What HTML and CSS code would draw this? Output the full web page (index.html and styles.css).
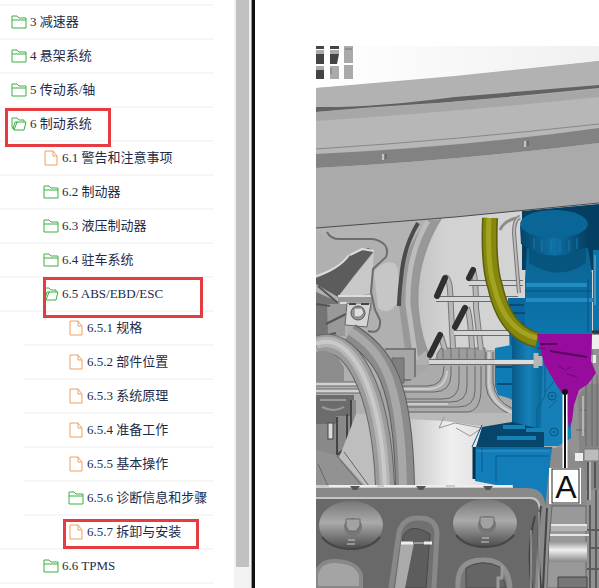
FILE: index.html
```html
<!DOCTYPE html>
<html lang="zh-CN">
<head>
    <meta charset="UTF-8">
    <meta name="viewport" content="width=device-width, initial-scale=1.0">
    <title>制动系统 - 6.5.7 拆卸与安装</title>
    <link rel="stylesheet" href="styles.css">
</head>
<body>
    <!-- Icons used by the tree -->
    <svg class="sprite" aria-hidden="true">
        <symbol id="icon-folder" viewBox="0 0 17 15">
            <path d="M1 13V1h5l2 2h7v10zM1 5h14" />
        </symbol>
        <symbol id="icon-open" viewBox="0 0 17 15">
            <path d="M3 13L1 10V1h5l2 2h5v2M3 13h10l2-8H6zM2 12l2-7h3" />
        </symbol>
        <symbol id="icon-file" viewBox="0 0 15 17">
            <path d="M1 1h8l4 5v9H1zM9 1v5h4" />
        </symbol>
    </svg>

    <div class="page">
        <!-- Left menu -->
        <nav class="sidebar">
            <ul class="tree">
                <li><a class="row" href="#"><svg class="icon folder"><use href="#icon-folder" /></svg>3 减速器</a></li>
                <li><a class="row" href="#"><svg class="icon folder"><use href="#icon-folder" /></svg>4 悬架系统</a></li>
                <li><a class="row" href="#"><svg class="icon folder"><use href="#icon-folder" /></svg>5 传动系/轴</a></li>
                <li>
                    <a class="row" href="#"><svg class="icon folder"><use href="#icon-open" /></svg>6 制动系统<span class="mark mark-system"></span></a>
                    <ul class="level-2">
                        <li><a class="row" href="#"><svg class="icon file"><use href="#icon-file" /></svg>6.1 警告和注意事项</a></li>
                        <li><a class="row" href="#"><svg class="icon folder"><use href="#icon-folder" /></svg>6.2 制动器</a></li>
                        <li><a class="row" href="#"><svg class="icon folder"><use href="#icon-folder" /></svg>6.3 液压制动器</a></li>
                        <li><a class="row" href="#"><svg class="icon folder"><use href="#icon-folder" /></svg>6.4 驻车系统</a></li>
                        <li class="group">
                            <a class="row" href="#"><svg class="icon folder"><use href="#icon-open" /></svg>6.5 ABS/EBD/ESC<span class="mark mark-abs"></span></a>
                            <ul class="level-3">
                                <li><a class="row" href="#"><svg class="icon file"><use href="#icon-file" /></svg>6.5.1 规格</a></li>
                                <li><a class="row" href="#"><svg class="icon file"><use href="#icon-file" /></svg>6.5.2 部件位置</a></li>
                                <li><a class="row" href="#"><svg class="icon file"><use href="#icon-file" /></svg>6.5.3 系统原理</a></li>
                                <li><a class="row" href="#"><svg class="icon file"><use href="#icon-file" /></svg>6.5.4 准备工作</a></li>
                                <li><a class="row" href="#"><svg class="icon file"><use href="#icon-file" /></svg>6.5.5 基本操作</a></li>
                                <li><a class="row" href="#"><svg class="icon folder"><use href="#icon-folder" /></svg>6.5.6 诊断信息和步骤</a></li>
                                <li><a class="row" href="#"><svg class="icon file"><use href="#icon-file" /></svg>6.5.7 拆卸与安装<span class="mark mark-install"></span></a></li>
                            </ul>
                        </li>
                        <li><a class="row" href="#"><svg class="icon folder"><use href="#icon-folder" /></svg>6.6 TPMS</a></li>
                    </ul>
                </li>
            </ul>
        </nav>
        <div class="scrollbar"><div class="thumb"></div></div>

        <!-- Document -->
        <main class="content">
            <svg class="figure" viewBox="316 46 283 542" role="img" aria-label="ABS A">
                <defs>
                    <linearGradient id="sky"><stop offset="0" stop-color="#fff" /><stop offset="1" stop-color="#f0f0f0" /></linearGradient>
                    <linearGradient id="cyl"><stop offset="0" stop-color="#075a87" /><stop offset=".5" stop-color="#1682b9" /><stop offset="1" stop-color="#07638f" /></linearGradient>
                    <linearGradient id="cap"><stop offset="0" stop-color="#04466c" /><stop offset=".5" stop-color="#0f71a6" /><stop offset="1" stop-color="#043e60" /></linearGradient>
                    <linearGradient id="tank" x2="0" y2="1"><stop offset="0" stop-color="#0c6392" /><stop offset="1" stop-color="#0b76ad" /></linearGradient>
                    <linearGradient id="bowl" x2="0" y2="1"><stop offset="0" stop-color="#777" /><stop offset=".45" stop-color="#aaa" /><stop offset="1" stop-color="#4c4c4c" /></linearGradient>
                    <linearGradient id="metal" x2="0" y2="1"><stop offset="0" stop-color="#999" /><stop offset=".4" stop-color="#f0f0f0" /><stop offset="1" stop-color="#888" /></linearGradient>
                    <linearGradient id="panel"><stop offset="0" stop-color="#c6c6c6" /><stop offset=".5" stop-color="#efefef" /><stop offset="1" stop-color="#ddd" /></linearGradient>
                    <linearGradient id="arch"><stop offset="0" stop-color="#c4c4c4" /><stop offset=".15" stop-color="#d2d2d2" /><stop offset="1" stop-color="#d6d6d6" /></linearGradient>
                </defs>
                <rect x="316" y="46" width="283" height="542" fill="#b0b0b0" />

                <!-- bonnet edge -->
                <path d="M316 46H599V61L455 76 316 88z" fill="url(#sky)" />
                <path d="M316 46h8v3h-8zM330 46h9v3h-9zM316 54h8v10h-8zM330 54h9l-2 10h-7zM316 70h8v9h-8z" fill="#444" />
                <path d="M316 50h8v4h-8zM330 50h9v4h-9zM316 66h8v4h-8zM330 66h9v13h-9zM344 46h9v17h-9zM344 65h9v14h-9z" fill="#aaa" />
                <path d="M331 68v6M345 49h7" stroke="#777" />
                <path d="M316 88Q455 79 599 61V88Q455 102 316 112z" fill="#b2b2b2" />
                <path d="M316 107Q370 108 455 97L599 85v3Q470 101 420 104T316 112z" fill="#626262" />
                <path d="M316 112Q455 103 599 89V97Q455 112 316 121z" fill="#a7a7a7" />
                <path d="M316 121Q455 112 599 97V129Q455 146 316 154z" fill="#b7b7b7" />
                <path d="M316 149Q455 140 599 124" fill="none" stroke="#888" />
                <path d="M316 154Q455 148 599 128V143Q455 161 316 168z" fill="#828282" />
                <path d="M316 168Q455 161 599 143V203L455 217 316 228z" fill="#aaa" />
                <path d="M383 154v6M525 141v6" stroke="#c4c4c4" stroke-width="2" />
                <path d="M386 154v5M528 141v5" stroke="#6b6b6b" stroke-width="2" />

                <!-- engine bay -->
                <path d="M316 228L420 220 398 303 380 314 372 280 387 250 373 239 340 240 316 232z" fill="#b3b3b3" />
                <path d="M374 272q8-12 20-9 7 4 4 38-8 16-20 7z" fill="#c6c6c6" />
                <path d="M428 220Q397 255 399 306L407 365 440 340V220z" fill="#989898" />
                <path d="M418 223Q405 245 402 270T399 306" fill="none" stroke="#4b4b4b" stroke-width="4" />
                <path d="M428 221Q407 255 408 305L416 360" fill="none" stroke="#bcbcbc" stroke-width="5" />
                <path d="M441 218Q414 262 418 310 420 337 432 363H599V203z" fill="url(#arch)" />
                <path d="M441 218Q414 262 418 310 420 337 432 363" fill="none" stroke="#979797" stroke-width="2" />
                <path d="M316 278Q340 269 350 255L368 248 374 251 353 277 338 297 326 290 316 284z" fill="#5c5c5c" />
                <path d="M338 297L374 252 371 293 338 300z" fill="#c8c8c8" />
                <path d="M350 255l12-6 12 2M316 276q23-7 33-21" fill="none" stroke="#ddd" stroke-width="2" />
                <path d="M338 297h34v14h-34z" fill="#989898" />
                <path d="M338 296h34M340 303h31" stroke="#ddd" stroke-width="2" />
                <path d="M327 232Q331 240 342 239H373Q391 243 386 257L373 269 371 292 375 310 380 320Q381 335 368 331" fill="none" stroke="#6d6d6d" stroke-width="2" />
                <path d="M316 292l18 8 8 8-1 25-25 14z" fill="#747474" />
                <path d="M327 304h18v32h-17z" fill="#999" />
                <path d="M318 286l20 17M316 304l14 2M326 324l20-10M316 338l20-5" stroke="#555" stroke-width="2" />
                <path d="M347 303h24l-4 24-22-2z" fill="#d5d5d5" stroke="#666" />
                <circle cx="358" cy="313" r="7" fill="#999" stroke="#555" />
                <path d="M354 308h8l2 5-4 4h-6z" fill="#ddd" stroke="#777" />
                <path d="M349 304h7M361 304h8" stroke="#444" stroke-width="2" />
                <path d="M380 348h35v17h31v100h-66z" fill="#a6a6a6" />
                <path d="M385 349h30v31h-14" fill="none" stroke="#777" stroke-width="2" />
                <path d="M392 358h12v25h-12z" fill="#808080" stroke="#666" />

                <!-- pipe bundle -->
                <path d="M430 366L440 350H513V424H407V383z" fill="#ababab" />
                <path d="M437 354l4-6h44v14h-48z" fill="#9d9d9d" stroke="#777" />
                <g fill="none" stroke="#777" stroke-width="6">
                    <path d="M445 277q4 1 5 12l3 59M467 308q3 5 5 40M473 270q3 10 3 38l5 42M441 336l4 14" />
                </g>
                <g fill="none" stroke="#b7b7b7" stroke-width="4">
                    <path d="M445 277q4 1 5 12l3 59M467 308q3 5 5 40M473 270q3 10 3 38l5 42M441 336l4 14" />
                </g>
                <path d="M443 348v14M451 348v14M459 348v14M467 348v14M475 348v14" stroke="#737373" />
                <!-- nested runs below the clamp -->
                <g fill="none" stroke="#676767">
                    <path d="M444 366q0 20-17 20H400M451 366v8q0 18-17 18H400M459 366v16q0 17-16 17H400M467 366v20q0 16-16 16H402M475 366v24q0 17-17 17H408M481 366v22q0 24-15 24H408" />
                    <path d="M486 352v34q1 18 27 30M493 352v30q2 19 20 27M499 352v26q2 18 14 22" />
                </g>
                <path d="M489 352v31q1 20 24 30" fill="none" stroke="#ccc" stroke-width="3" />
                <path d="M402 389h27q17-1 18-18M402 404h46" fill="none" stroke="#ccc" stroke-width="2" />
                <!-- pipes running to the unit -->
                <path d="M436 299h82M469 283h54M454 333h56M429 362h108" stroke="#6b6b6b" stroke-width="6" />
                <path d="M436 299h82M469 283h54M454 333h56M429 362h108" stroke="#d6d6d6" stroke-width="4" />
                <g fill="none" stroke="#2f2f2f" stroke-width="6" stroke-linecap="round">
                    <path d="M445 278l-8 18M473 270l-4 8M465 308l-10 19M440 335l-10 20" />
                </g>
                <path d="M316 384h45M316 391h45" stroke="#666" stroke-width="5" />
                <path d="M316 384h45M316 391h45" stroke="#d1d1d1" stroke-width="3" />

                <!-- left housing -->
                <path d="M316 395h38v54h-38z" fill="#6c6c6c" />
                <path d="M322 407q12 6 22 0M320 400h26" fill="none" stroke="#999" stroke-width="2" />
                <path d="M316 424h20v-8h16v-16h4v42l-8 15h-32z" fill="#898989" />
                <path d="M337 417v38l10-8V414M351 400v43" fill="none" stroke="#444" stroke-width="2" />
                <rect x="328" y="423" width="5" height="16" fill="#ddd" stroke="#444" />
                <path d="M356 414h24l8 72h-38l-11-28z" fill="#bebebe" />
                <path d="M316 450l21 5 28 31h-49z" fill="#929292" />
                <path d="M337 456l25 30M344 452l25 34M318 464l10 22" stroke="#666" />
                <path d="M407 413h51l36 6v67h-87z" fill="url(#panel)" />
                <path d="M407 413h106v10l-14 6-54-8-38-2z" fill="#b9b9b9" />
                <path d="M444 417l-5 11 16-5M455 423l27 5-12 8-14-8" fill="none" stroke="#999" />

                <!-- hoses -->
                <g fill="none">
                    <path d="M350 333C384 355 403 380 405 486" stroke="#5c5c5c" stroke-width="20" />
                    <path d="M350 333C384 355 403 380 405 486" stroke="#8b8b8b" stroke-width="18" />
                    <path d="M350 331C384 353 401 380 403 486" stroke="#a8a8a8" stroke-width="8" />
                    <path d="M316 346C350 332 381 386 385 486" stroke="#666" stroke-width="20" />
                    <path d="M316 346C350 332 381 386 385 486" stroke="#9b9b9b" stroke-width="18" />
                    <path d="M316 344C350 330 381 386 385 486" stroke="#b5b5b5" stroke-width="10" />
                    <path d="M316 344C350 330 381 386 385 486" stroke="#c9c9c9" stroke-width="4" />
                </g>
                <path d="M316 352q18-5 28 16v13h-28z" fill="#8c8c8c" />

                <!-- ABS unit, blue -->
                <path d="M508 298h20v60h-18z" fill="#0869a0" />
                <path d="M509 305h15M505 313h20M504 324h20" stroke="#064c77" stroke-width="2" />
                <path d="M495 348l17-3v54l-14-4-3-9z" fill="#107cb6" />
                <path d="M496 367h17M497 384h15" stroke="#064d77" stroke-width="2" />
                <path d="M512 333h33v98h-33z" fill="url(#cyl)" />
                <path d="M495 362h42" stroke="#6b6b6b" stroke-width="6" />
                <path d="M495 362h42" stroke="#ddd" stroke-width="4" />
                <path d="M543 350l13-2 8 33 8 17-1 48h-31z" fill="#167fb7" />
                <path d="M545 356v40l-8 12v28M557 378l-12 14M557 400l-8 8" fill="none" stroke="#0b5f8e" />
                <path d="M482 427l30-5 32 8v17h-68z" fill="#05466a" />
                <path d="M497 438h39M503 427h22M526 430h18" stroke="#1680b8" stroke-width="4" />
                <path d="M475 447h77l2 3-6 60h-4l-6-17-63-12z" fill="#127db9" />
                <path d="M472 447l10-22M474 448h78M482 448v24M496 482v-26h53" fill="none" stroke="#075a89" />
                <path d="M474 447v32" stroke="#04334d" stroke-width="3" />
                <path d="M477 451h72" stroke="#2b97ca" />
                <g fill="#1680b8" stroke="#0b5580"><circle cx="552" cy="396" r="4" /><circle cx="554" cy="432" r="4" /><circle cx="552" cy="396" r="1" /><circle cx="554" cy="432" r="1" /></g>
                <path d="M536 353v15M540 356v10" stroke="#b6b6b6" stroke-width="5" />

                <!-- reservoir -->
                <path d="M522 211L599 204V270H522z" fill="#043f62" />
                <path d="M593 250h6v86h-6z" fill="#0875ad" />
                <path d="M595 255v50" stroke="#7fb3cf" />
                <path d="M527 248h61l4 25v61h-65l-2-10V279z" fill="url(#tank)" />
                <path d="M529 244q27 20 57 2v17q-27 19-57 0z" fill="#07547f" />
                <path d="M526 283h61v4h-61zM526 298h67v4h-67z" fill="#218bc2" />
                <path d="M525 291h67M588 279v53" stroke="#07527f" />
                <path d="M520 226q35-16 68 0v20q-35 20-67-2z" fill="url(#cap)" />
                <path d="M534 238v11M542 240v11M551 241v11M560 241v11M569 240v11M577 238v11" stroke="#1b7cae" />
                <ellipse cx="554" cy="224" rx="34" ry="14" fill="#0a6696" />
                <path d="M520 217q-6 2-6 16l5 60" fill="none" stroke="#777" stroke-width="4" />
                <path d="M520 217q-6 2-6 16l5 60" fill="none" stroke="#bbb" stroke-width="2" />
                <path d="M516 218q-12 3-16 12" fill="none" stroke="#8d8d8d" stroke-width="3" />

                <path d="M490 218Q488 265 495 286 505 332 537 340" fill="none" stroke="#5c5f08" stroke-width="16" />
                <path d="M490 218Q488 265 495 286 505 332 537 340" fill="none" stroke="#85870f" stroke-width="13" />
                <path d="M489 218Q487 265 494 286 504 330 537 338" fill="none" stroke="#a3a320" stroke-width="5" />
                <path d="M316 228L455 217 599 203V190L455 204 316 214z" fill="#aaa" />
                <path d="M316 228L455 217 599 203" fill="none" stroke="#4b4b4b" />

                <!-- right side parts -->
                <path d="M573 334h26v254h-54v-80l10-60 16-10z" fill="#929292" />
                <path d="M592 335h7v14h-7zM588 355h8v8h-8z" fill="#eee" />
                <path d="M592 332h7" stroke="#333" stroke-width="3" />
                <path d="M578 396l9-12h12v106h-19z" fill="#858585" />
                <path d="M586 380v66M592 350v96M597 375v71M580 410h6M576 430h9" stroke="#666" />
                <path d="M583 396v40M590 460v40" stroke="#b4b4b4" stroke-width="2" />
                <path d="M584 449h15v12h-15z" fill="#bcbcbc" stroke="#777" />
                <path d="M588 462v38M595 462v26" stroke="#555" stroke-width="2" />
                <path d="M552 448h16l17 22 2 38h-42l3-28z" fill="#8b8b8b" />
                <path d="M575 453h8v8h-8z" fill="#eee" />
                <path d="M537 334h55l-1 27 5 12-8 11-9 6-5 15-2 16-3 8-4-31-9-14-6-10-6-11z" fill="#970c9c" />
                <path d="M540 344h17M550 351l37 6" fill="none" stroke="#55055a" stroke-width="2" />
                <path d="M537 348l9 1M558 366l7 4 6-3M567 374l10 3" fill="none" stroke="#6f0874" />

                <!-- lower tray -->
                <path d="M316 485h197v10H316z" fill="#ccc" />
                <path d="M316 488H527q16 0 18 15v85H316z" fill="#898989" />
                <path d="M316 499H530q9 0 9 11l-4 78H316z" fill="#696969" />
                <path d="M316 498H531q8 0 9 12" fill="none" stroke="#c4c4c4" stroke-width="2" />
                <path d="M329 486h48M384 486h62M455 486h57" stroke="#eee" stroke-width="2" />
                <path d="M350 486l3 4h4l3-4M416 486l3 4h4l3-4M483 486l3 4h4l3-4" fill="#555" />
                <g id="bowl-hole">
                    <ellipse cx="351" cy="525" rx="32" ry="24" fill="url(#bowl)" />
                    <path d="M322 537q10 12 29 12t29-12" fill="none" stroke="#464646" stroke-width="2" />
                    <circle cx="353" cy="527" r="9" fill="#777" />
                    <path d="M346 519h14v7l-4 5h-7l-3-5z" fill="#a2a2a2" stroke="#6a6a6a" />
                    <path d="M348 540h7M347 544h8" stroke="#ccc" />
                </g>
                <use href="#bowl-hole" x="134" y="-2" />
                <path d="M391 588l8-56q5-15 20-14 17 0 18 15l-3 55" fill="#707070" stroke="#888" stroke-width="5" />
                <path d="M397 588l6-52q8-14 27-2l-4 54z" fill="#5d5d5d" stroke="#484848" />
                <path d="M401 543h13l-9 45h-10z" fill="#aaa" />
                <path d="M401 543h12M424 543h8" stroke="#eee" stroke-width="3" />
                <path d="M414 543h10" stroke="#ddd" />
                <path d="M316 573q5-13 20-12 21 1 25 14v13h-45z" fill="#a4a4a4" stroke="#888" stroke-width="4" />
                <path d="M458 588q-2-28 24-28 26-1 28 28" fill="#777" stroke="#909090" stroke-width="5" />
                <path d="M466 588v-20q16-10 34-1l6 21z" fill="#656565" stroke="#4c4c4c" />
                <path d="M502 566v12h-4v10" fill="none" stroke="#999" stroke-width="3" />
                <path d="M535 516q-9 33-3 72M541 506q-5 31 0 82M547 508l-4 80" fill="none" stroke="#444" stroke-width="2" />
                <path d="M531 530v58M539 512v76" stroke="#bbb" />
                <path d="M552 506h34v82h-39l2-45z" fill="#999" stroke="#666" />
                <path d="M551 524h36v7h-36z" fill="#b5b5b5" />
                <path d="M551 525h36M550 535h39" stroke="#e7e7e7" stroke-width="2" />
                <path d="M549 542h38v20h-38z" fill="url(#metal)" />
                <path d="M558 577h29v11h-29z" fill="#777" stroke="#444" />
                <path d="M590 505v83M596 490v98M587 530h12M590 548h9M587 569h12" stroke="#5b5b5b" stroke-width="2" />

                <!-- callout -->
                <path d="M565 392v77" stroke="#fff" stroke-width="5" />
                <path d="M565 392v77" stroke="#111" stroke-width="2" />
                <circle cx="565" cy="392" r="3" fill="#111" />
                <path d="M549 468h32v36h-32z" fill="#fff" />
                <rect x="552" y="469" width="27" height="34" fill="#fff" stroke="#222" />
                <text class="callout" x="566" y="498">A</text>
            </svg>
        </main>
    </div>
</body>
</html>
```

FILE: styles.css
```css
/* Global styles */
body {
    margin: 0;
    background-color: #fff;
    font-family: "Liberation Serif", "Noto Sans CJK SC", serif;
    font-size: 13px;
    line-height: 20px;
    color: #1c2b4a;
}

.sprite {
    display: none;
}

.page {
    display: flex;
    min-height: 100vh;
}

/* Left menu */
.sidebar {
    flex: none;
    width: 214px;
    padding-right: 20px;
}

ul {
    list-style: none;
    margin: 0;
    padding: 0;
}

.tree {
    margin-top: 4px;
    border-top: 2px solid #f7f7f7;
}

.row {
    position: relative;
    display: flex;
    align-items: center;
    gap: 2px;
    height: 32px;
    padding-left: 11px;
    border-bottom: 2px solid #f7f7f7;
    color: inherit;
    text-decoration: none;
    white-space: pre;
}

.level-2 .row {
    padding-left: 43px;
}

.level-3 {
    margin-left: 24px;
}

.level-3 .row {
    padding-left: 44px;
}

/* the last child leaves its line to the group, which is full width */
.level-3 li:last-child .row {
    border-bottom: none;
}

.group {
    border-bottom: 2px solid #f7f7f7;
}

/* Icons */
.icon {
    flex: none;
    width: 17px;
    height: 15px;
    fill: none;
    stroke-width: 1;
}

.folder {
    stroke: #3cb043;
}

.file {
    height: 17px;
    stroke: #f0a060;
}

/* Red frames over the tree */
.mark {
    position: absolute;
    box-sizing: border-box;
    border: 3px solid #e63c41;
}

.mark-system {
    top: 0;
    left: 5px;
    width: 106px;
    height: 39px;
    z-index: 1;
}

.mark-abs {
    top: -1px;
    left: 43px;
    width: 160px;
    height: 41px;
    z-index: 1;
}

.mark-install {
    top: 3px;
    left: 39px;
    width: 136px;
    height: 30px;
}

/* Scrollbar and frame edge */
.scrollbar {
    flex: none;
    box-sizing: border-box;
    width: 21px;
    padding: 0 2px 21px;
    display: flex;
    background-color: #f3f3f3;
    border-right: 3px solid #111;
    box-shadow: inset -1px 0 #999;
}

.thumb {
    width: 13px;
    background-color: #c1c1c1;
}

/* Document */
.content {
    flex: 1;
    min-width: 0;
    padding: 46px 0 0 61px;
}

.figure {
    display: block;
    width: 100%;
}

.callout {
    font-family: "Liberation Sans", sans-serif;
    font-size: 32px;
    text-anchor: middle;
    fill: #111;
}
```
